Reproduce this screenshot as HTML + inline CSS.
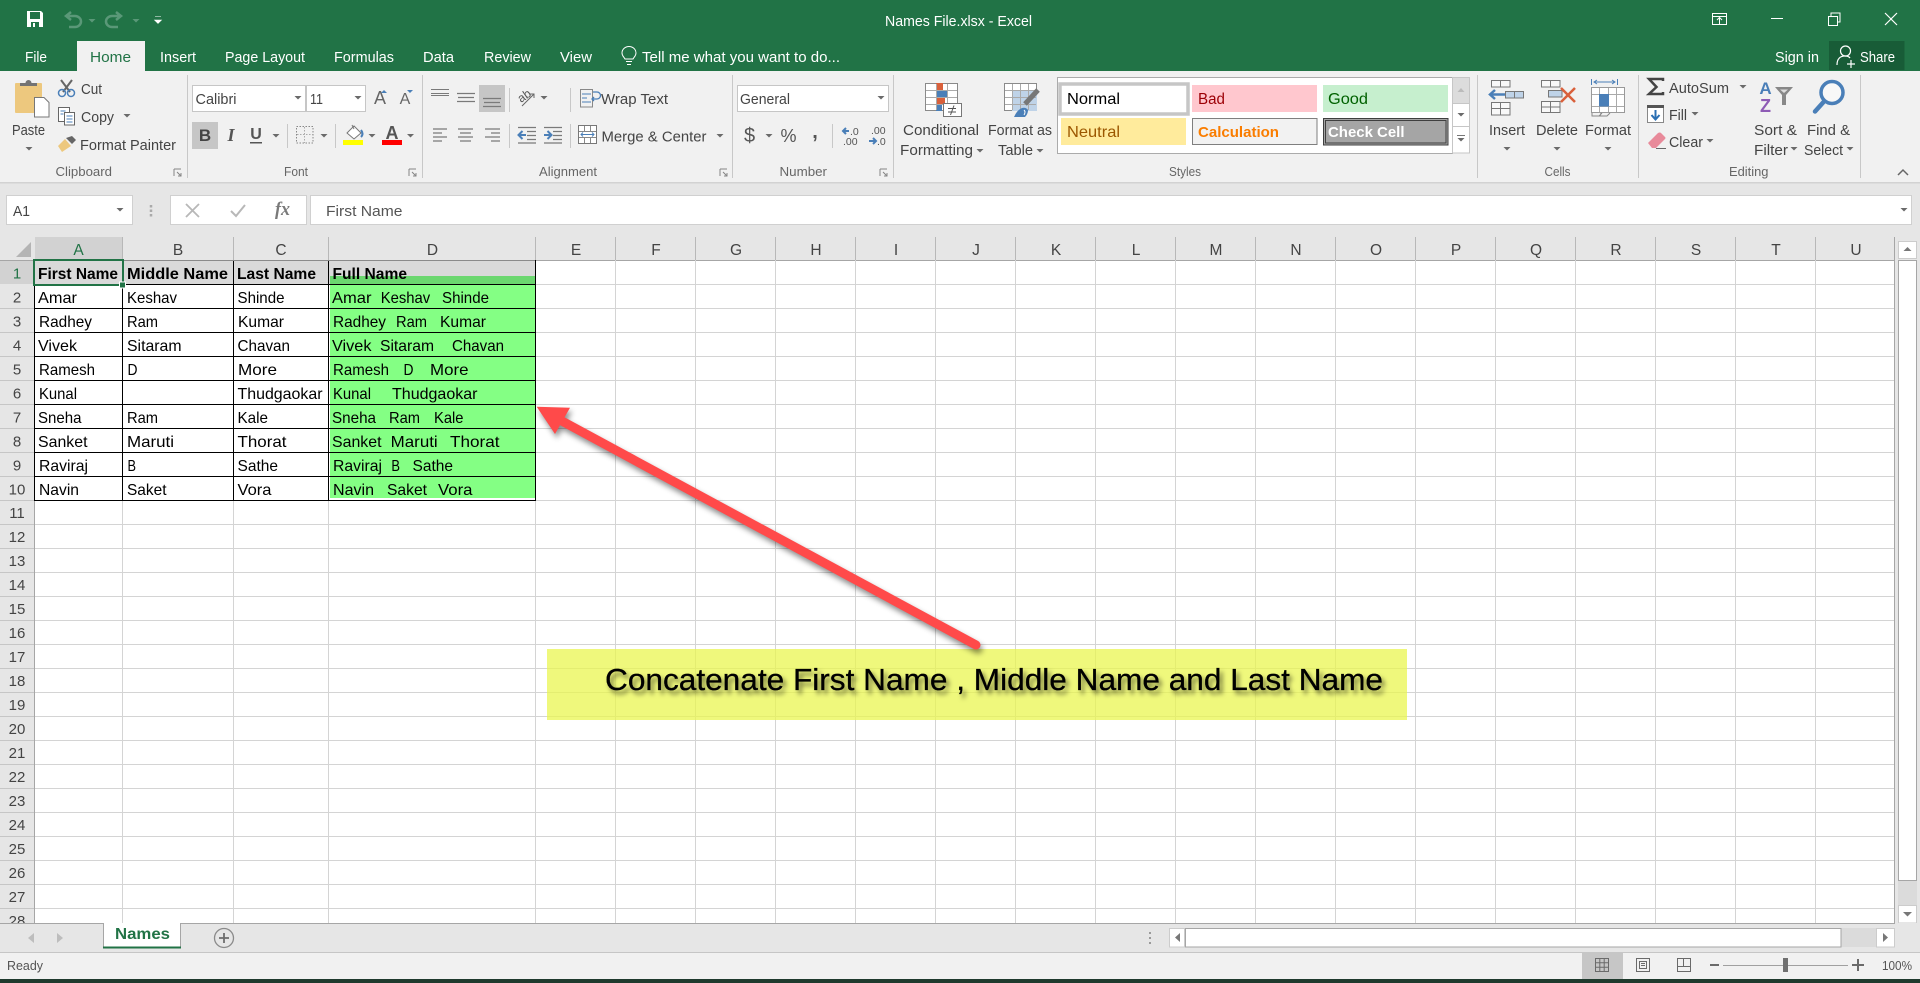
<!DOCTYPE html>
<html><head><meta charset="utf-8"><title>Names File.xlsx - Excel</title>
<style>
html,body{margin:0;padding:0;background:#fff;width:1920px;height:983px;overflow:hidden}
svg{display:block;position:absolute;left:0;top:0}
text{font-family:"Liberation Sans",sans-serif;white-space:pre}
.t{font-size:15px;fill:#fff}
.r{font-size:15px;fill:#444}
.g{font-size:12.5px;fill:#666}
.c{font-size:16px;fill:#000}
.b{font-size:16px;fill:#000;font-weight:bold}
.h{font-size:15.5px;fill:#444;text-anchor:middle}
.n{font-size:15px;fill:#444;text-anchor:middle}
.ic{fill:none;stroke:#7a7a7a;stroke-width:1}
.bl{fill:none;stroke:#4a7fb8;stroke-width:2}
.ln{fill:none;stroke:#7a7a7a;stroke-width:1.3}
</style></head><body>
<svg width="1920" height="983" viewBox="0 0 1920 983" xmlns="http://www.w3.org/2000/svg">
<defs>
<path id="dd" d="M-3.5 0h7l-3.5 3.5z" fill="#6a6a6a"/>
<path id="dl" d="M0 0h7M0 0v7M3 3l4 4M7 4v3H4" stroke="#858585" fill="none"/>
</defs>

<!-- title bar -->
<rect x="0" y="0" width="1920" height="71" fill="#217346"/>
<path d="M27 11h14l2 2v14H27z" fill="#fff"/><rect x="30" y="12" width="10" height="7" fill="#217346"/><rect x="31" y="22" width="8" height="5" fill="#217346"/><rect x="33" y="23" width="2" height="4" fill="#fff"/>
<path d="M66 16h9a6 5.5 0 0 1 0 11h-6M71 12l-5 4 5 4" fill="none" stroke="#5a9878" stroke-width="2.5"/>
<path d="M88.500 19h7l-3.500 3.500z" fill="#5a9878"/>
<path d="M121 16h-9a6 5.500 0 0 0 0 11h6M116 12l5 4-5 4" fill="none" stroke="#5a9878" stroke-width="2.5"/>
<path d="M132.500 19h7l-3.500 3.500z" fill="#5a9878"/>
<path d="M155 16.500h6M154.500 20h7l-3.500 3.500z" fill="#fff" stroke="#fff" stroke-width=".6"/>
<text class="t" x="885" y="26" textLength="147" lengthAdjust="spacingAndGlyphs">Names File.xlsx - Excel</text>
<rect x="1712.500" y="13.500" width="14" height="11" fill="none" stroke="#fff"/><path d="M1713 16.500h13M1719.500 24v-6M1717 20l2.500-2.500 2.500 2.500" fill="none" stroke="#fff"/>
<path d="M1771 18.500h12" stroke="#fff" fill="none"/>
<path d="M1828.500 16.500h9v9h-9zM1831 16v-3h9v9h-2.500" fill="none" stroke="#fff"/>
<path d="M1885 13l12 12M1897 13l-12 12" stroke="#fff" fill="none" stroke-width="1.200"/>

<!-- tabs -->
<rect x="77" y="41" width="68" height="30" fill="#f1f1f1"/>
<text class="t" x="25" y="62" textLength="22" lengthAdjust="spacingAndGlyphs">File</text>
<text class="t" x="90" y="62" textLength="41" lengthAdjust="spacingAndGlyphs" style="fill:#217346">Home</text>
<text class="t" x="160" y="62" textLength="36" lengthAdjust="spacingAndGlyphs">Insert</text>
<text class="t" x="225" y="62" textLength="80" lengthAdjust="spacingAndGlyphs">Page Layout</text>
<text class="t" x="334" y="62" textLength="60" lengthAdjust="spacingAndGlyphs">Formulas</text>
<text class="t" x="423" y="62" textLength="31" lengthAdjust="spacingAndGlyphs">Data</text>
<text class="t" x="484" y="62" textLength="47" lengthAdjust="spacingAndGlyphs">Review</text>
<text class="t" x="560" y="62" textLength="32" lengthAdjust="spacingAndGlyphs">View</text>
<path d="M625 59c-1-2-3-3-3-6a7 6.500 0 0 1 14 0c0 3-2 4-3 6zM626 61.500h6M627 64.500h4" fill="none" stroke="#fff"/>
<text class="t" x="642" y="62" textLength="198" lengthAdjust="spacingAndGlyphs">Tell me what you want to do...</text>
<text class="t" x="1775" y="62" textLength="44" lengthAdjust="spacingAndGlyphs">Sign in</text>
<rect x="1829" y="41" width="75.500" height="29" fill="#185c37"/>
<path d="M1837 65c0-6 3-9 8-9 2 0 4 .5 5 2M1851 60v8M1847 64h8" fill="none" stroke="#fff" stroke-width="1.200"/><circle cx="1845.500" cy="51" r="5" fill="none" stroke="#fff" stroke-width="1.200"/>
<text class="t" x="1860" y="62" textLength="35" lengthAdjust="spacingAndGlyphs">Share</text>

<!-- ribbon -->
<rect x="0" y="71" width="1920" height="111" fill="#f1f1f1"/>
<rect x="0" y="182" width="1920" height="1.500" fill="#d2d2d2"/>
<rect x="0" y="183.500" width="1920" height="54" fill="#e6e6e6"/>
<path d="M187.500 75v103M422.500 75v103M732.500 75v103M893.500 75v103M1477.500 75v103M1638.500 75v103M1860.500 75v103" stroke="#c8c8c8" fill="none"/>

<text class="g" x="55.500" y="176" textLength="56.500" lengthAdjust="spacingAndGlyphs">Clipboard</text>
<text class="g" x="284" y="176" textLength="24" lengthAdjust="spacingAndGlyphs">Font</text>
<text class="g" x="539" y="176" textLength="58" lengthAdjust="spacingAndGlyphs">Alignment</text>
<text class="g" x="779.500" y="176" textLength="47.500" lengthAdjust="spacingAndGlyphs">Number</text>
<text class="g" x="1169" y="176" textLength="32" lengthAdjust="spacingAndGlyphs">Styles</text>
<text class="g" x="1544.500" y="176" textLength="26" lengthAdjust="spacingAndGlyphs">Cells</text>
<text class="g" x="1729" y="176" textLength="39.500" lengthAdjust="spacingAndGlyphs">Editing</text>
<use href="#dl" x="174" y="169"/><use href="#dl" x="409" y="169"/><use href="#dl" x="720" y="169"/><use href="#dl" x="880" y="169"/>
<path d="M1898 175l5-5 5 5" fill="none" stroke="#666" stroke-width="1.500"/>

<!-- clipboard -->
<rect x="15" y="83" width="27" height="30" rx="1" fill="#edc87e"/>
<path d="M20 86v-3h5.500a3 3 0 0 1 6 0h5.500v3z" fill="#737373"/>
<path d="M34.500 97.500h9.500l5 5v14.500h-14.500z" fill="#fff" stroke="#777"/>
<text class="r" x="12" y="135" textLength="33" lengthAdjust="spacingAndGlyphs">Paste</text>
<use href="#dd" x="29" y="147"/>
<path d="M61 80l9 12M72 80l-9 12" stroke="#666" stroke-width="2" fill="none"/><circle cx="62" cy="93" r="3.500" fill="none" stroke="#4a7fb8" stroke-width="1.500"/><circle cx="71" cy="93" r="3.500" fill="none" stroke="#4a7fb8" stroke-width="1.500"/>
<text class="r" x="81" y="94" textLength="21" lengthAdjust="spacingAndGlyphs">Cut</text>
<rect x="58.500" y="107.500" width="11" height="14" fill="#fff" stroke="#666"/><rect x="64.500" y="112.500" width="10" height="12.500" fill="#fff" stroke="#666"/><path d="M60.500 111h5M60.500 114h3M66.500 116h6M66.500 119h6M66.500 122h6" stroke="#4a7fb8" fill="none"/>
<text class="r" x="81" y="122" textLength="33" lengthAdjust="spacingAndGlyphs">Copy</text>
<use href="#dd" x="127" y="114"/>
<path d="M58 146l7-7 6 7-9 6z" fill="#edc87e"/><path d="M66 138l6 6 4-4-4-4z" fill="#666"/>
<text class="r" x="80" y="150" textLength="96" lengthAdjust="spacingAndGlyphs">Format Painter</text>

<!-- font -->
<rect x="192.500" y="85.500" width="113" height="26" fill="#fff" stroke="#c6c6c6"/>
<rect x="306.500" y="85.500" width="59" height="26" fill="#fff" stroke="#c6c6c6"/>
<text class="r" x="195.500" y="104" textLength="41" lengthAdjust="spacingAndGlyphs">Calibri</text>
<text class="r" x="310" y="104" textLength="13" lengthAdjust="spacingAndGlyphs">11</text>
<use href="#dd" x="298" y="96"/><use href="#dd" x="358" y="96"/>
<text x="380" y="104" text-anchor="middle" style="font-size:18px;fill:#666">A</text><path d="M384 90l3 3h-6z" fill="#4a7fb8"/>
<text x="405" y="104" text-anchor="middle" style="font-size:16px;fill:#666">A</text><path d="M407 90h6l-3 3z" fill="#4a7fb8"/>
<rect x="192" y="122" width="26" height="27" fill="#c6c6c6"/>
<text x="205" y="141" text-anchor="middle" style="font-size:17px;font-weight:bold;fill:#444">B</text>
<text x="231" y="141" text-anchor="middle" style="font-family:'Liberation Serif',serif;font-size:18px;font-weight:bold;font-style:italic;fill:#555">I</text>
<text x="256" y="139" text-anchor="middle" style="font-size:16px;font-weight:bold;fill:#555">U</text><rect x="250" y="142" width="12" height="1.500" fill="#555"/>
<use href="#dd" x="276" y="134"/>
<path d="M287.500 124v24M335.500 124v24" stroke="#c8c8c8" fill="none"/>
<rect x="296.500" y="126.500" width="16.500" height="16.500" fill="none" stroke="#888" stroke-dasharray="1.500 1.500"/><path d="M304.500 127v16M297 134.500h16" stroke="#aaa" stroke-dasharray="1.500 1.500" fill="none"/>
<use href="#dd" x="324" y="134"/>
<path d="M347 133l7-7 7 7-7 6z" fill="#fff" stroke="#777"/><path d="M361 130q3 4 0 7" stroke="#4a7fb8" stroke-width="2" fill="none"/><path d="M352 125l2 4" stroke="#777" fill="none"/>
<rect x="343" y="140" width="20" height="5" fill="#ff0"/>
<use href="#dd" x="372" y="134"/>
<text x="392" y="139" text-anchor="middle" style="font-size:18px;font-weight:bold;fill:#555">A</text>
<rect x="382" y="140" width="20" height="5" fill="#f00"/>
<use href="#dd" x="410.500" y="134"/>

<!-- alignment -->
<path d="M431 89.500h18M431 93.500h18M431 95.500h18" stroke="#7a7a7a" fill="none"/>
<path d="M457 93.500h18M458 97.500h16M457 101.500h18" class="ln"/>
<rect x="479" y="85" width="26" height="27" fill="#c6c6c6"/>
<path d="M483 98.500h18M484 102.500h16M483 106.500h18" class="ln"/>
<text x="521" y="103" transform="rotate(-35 521 103)" style="font-size:12px;fill:#555">ab</text><path d="M522 106l12-12M534 98v-4h-4" fill="none" stroke="#666"/>
<use href="#dd" x="544" y="96"/>
<path d="M509.500 88v24M570.500 88v24M509.500 124v24M570.500 124v24" stroke="#c8c8c8" fill="none"/>
<rect x="580.500" y="89.500" width="12" height="17.500" fill="#f1f1f1" stroke="#888"/><path d="M582 94h9M582 98h5M582 102h9" stroke="#4a7fb8" fill="none"/><path d="M593 92h4a3 3 0 0 1 0 7h-5M594 97l-2 2 2 2" fill="none" stroke="#4a7fb8" stroke-width="1.300"/>
<text class="r" x="601" y="104" textLength="67" lengthAdjust="spacingAndGlyphs">Wrap Text</text>
<rect x="578.500" y="125.500" width="18" height="18" fill="#fff" stroke="#777"/><path d="M579 131.500h17M579 137.500h17M584.500 126v5M590.500 126v5M584.500 138v5M590.500 138v5" stroke="#888" fill="none"/><rect x="579" y="132" width="17" height="5" fill="#fff"/><path d="M581 134.500h13M583 132.500l-2 2 2 2M592 132.500l2 2-2 2" stroke="#4a7fb8" fill="none"/>
<text class="r" x="601.500" y="141.500" textLength="105" lengthAdjust="spacingAndGlyphs">Merge &amp; Center</text>
<use href="#dd" x="720" y="134"/>
<path d="M433 129h14M433 133h9M433 137h14M433 141h9" class="ln"/>
<path d="M458 129h15M460 133h11M458 137h15M460 141h11" class="ln"/>
<path d="M485 129h15M491 133h9M485 137h15M491 141h9" class="ln"/>
<path d="M518 127.500h18M527 131.500h9M527 135.500h9M527 139.500h9M518 143h18" class="ln"/><path d="M526 135h-7M522.500 131l-4 4 4 4" class="bl"/>
<path d="M544 127.500h18M553 131.500h9M553 135.500h9M553 139.500h9M544 143h18" class="ln" /><path d="M544 135h7M547.500 131l4 4-4 4" class="bl"/>

<!-- number -->
<rect x="737.500" y="85.500" width="151" height="26" fill="#fff" stroke="#c6c6c6"/>
<text class="r" x="740" y="104" textLength="50" lengthAdjust="spacingAndGlyphs">General</text>
<use href="#dd" x="881" y="96"/>
<text x="749.500" y="142" text-anchor="middle" style="font-size:20px;fill:#555">$</text>
<use href="#dd" x="769" y="134"/>
<text x="788.500" y="142" text-anchor="middle" style="font-size:18px;fill:#555">%</text>
<text x="815" y="138" text-anchor="middle" style="font-size:20px;font-weight:bold;fill:#555">,</text>
<path d="M832.500 124v24" stroke="#c8c8c8" fill="none"/>
<path d="M849 131h-6M846 128l-3 3 3 3" fill="none" stroke="#4a7fb8" stroke-width="2"/>
<text x="850" y="135" style="font-size:10.500px;fill:#555">.0</text><text x="843" y="145" style="font-size:10.500px;fill:#555">.00</text>
<text x="871" y="134" style="font-size:10.500px;fill:#555">.00</text>
<path d="M869 141h7M873 138l3 3-3 3" fill="none" stroke="#4a7fb8" stroke-width="2"/>
<text x="877" y="145" style="font-size:10.500px;fill:#555">.0</text>

<!-- conditional formatting -->
<rect x="925.500" y="83.500" width="32" height="27" fill="#fff" stroke="#8a8a8a"/>
<rect x="936" y="83" width="7" height="7" fill="#d9603b"/><rect x="936" y="91" width="11" height="6" fill="#4a7fb8"/><rect x="936" y="98" width="9" height="6" fill="#d9603b"/><rect x="936" y="105" width="6" height="6" fill="#4a7fb8"/>
<path d="M936.500 84v26M947.500 84v26M926 90.500h31M926 97.500h31M926 104.500h31" stroke="#aaa" fill="none"/>
<rect x="943.500" y="103.500" width="18" height="13" fill="#fff" stroke="#777"/><path d="M948 108.500h8M948 112h8M954 105.500l-3.500 9.500" stroke="#555" fill="none"/>
<text class="r" x="903" y="135" textLength="76" lengthAdjust="spacingAndGlyphs">Conditional</text>
<text class="r" x="900" y="155" textLength="73" lengthAdjust="spacingAndGlyphs">Formatting</text>
<use href="#dd" x="980" y="149"/>
<rect x="1004.500" y="83.500" width="32" height="27" fill="#fff" stroke="#8a8a8a"/>
<rect x="1012" y="90" width="25" height="21" fill="#bfd3e8"/>
<path d="M1012.500 84v26M1020.500 84v26M1028.500 84v26M1005 90.500h31M1005 97.500h31M1005 104.500h31" stroke="#aaa" fill="none"/>
<path d="M1038 90l-13 14" stroke="#777" stroke-width="5" fill="none"/>
<path d="M1014 117q3-7 8-9q4-1 6 2q0 4-3 7z" fill="#4a7fb8"/><path d="M1024 110q2 2 0 5" stroke="#fff" fill="none"/>
<text class="r" x="988" y="135" textLength="64" lengthAdjust="spacingAndGlyphs">Format as</text>
<text class="r" x="998" y="155" textLength="35" lengthAdjust="spacingAndGlyphs">Table</text>
<use href="#dd" x="1040" y="149"/>

<!-- styles gallery -->
<rect x="1057.500" y="77.500" width="395" height="76" fill="#fff" stroke="#ababab"/>
<rect x="1060" y="84" width="128" height="30" fill="#fff" stroke="#c6c6c6" stroke-width="3.500"/>
<text x="1067" y="104" textLength="53" lengthAdjust="spacingAndGlyphs" style="font-size:16px;fill:#000">Normal</text>
<rect x="1192" y="85" width="125" height="27" fill="#ffc7ce"/>
<text x="1198" y="104" textLength="27" lengthAdjust="spacingAndGlyphs" style="font-size:15.500px;fill:#9c0006">Bad</text>
<rect x="1323" y="85" width="125" height="27" fill="#c6efce"/>
<text x="1328" y="104" textLength="40" lengthAdjust="spacingAndGlyphs" style="font-size:16px;fill:#006100">Good</text>
<rect x="1061" y="118" width="125" height="27" fill="#ffeb9c"/>
<text x="1067" y="137" textLength="53" lengthAdjust="spacingAndGlyphs" style="font-size:16px;fill:#9c5700">Neutral</text>
<rect x="1192.500" y="118.500" width="124.500" height="26" fill="#f2f2f2" stroke="#7f7f7f"/>
<text x="1198" y="137" textLength="81" lengthAdjust="spacingAndGlyphs" style="font-size:15px;font-weight:bold;fill:#fa7d00">Calculation</text>
<rect x="1323.500" y="118.500" width="124.500" height="26.500" fill="#a5a5a5" stroke="#3f3f3f"/>
<rect x="1325.500" y="120.500" width="120.500" height="22.500" fill="none" stroke="#3f3f3f"/>
<text x="1328" y="137" textLength="76.500" lengthAdjust="spacingAndGlyphs" style="font-size:15px;font-weight:bold;fill:#fff">Check Cell</text>
<rect x="1452.500" y="77.500" width="17" height="26" fill="#dcdcdc" stroke="#c6c6c6"/>
<rect x="1452.500" y="103.500" width="17" height="23" fill="#fff" stroke="#c6c6c6"/>
<rect x="1452.500" y="126.500" width="17" height="26.500" fill="#fff" stroke="#c6c6c6"/>
<path d="M1461 88l3.500 4h-7z" fill="#bbb"/>
<use href="#dd" x="1461" y="113"/>
<path d="M1457 135.500h8" stroke="#777" fill="none"/><use href="#dd" x="1461" y="138"/>

<!-- cells -->
<rect x="1491.500" y="80.500" width="18.500" height="6.500" fill="#f8f8f8" stroke="#777"/><path d="M1500.500 81v6" stroke="#777" fill="none"/>
<path d="M1505 94.500h-14M1495 90l-5 4.500 5 4.500" fill="none" stroke="#4a7fb8" stroke-width="2.500"/>
<rect x="1505.500" y="91.500" width="18" height="6.500" fill="#bfd3e8" stroke="#777"/><path d="M1514.500 92v6" stroke="#777" fill="none"/>
<rect x="1491.500" y="102.500" width="18.500" height="12.500" fill="#f8f8f8" stroke="#777"/><path d="M1500.500 103v12M1492 108.500h18" stroke="#777" fill="none"/>
<text class="r" x="1489" y="135" textLength="36" lengthAdjust="spacingAndGlyphs">Insert</text><use href="#dd" x="1507" y="147"/>
<rect x="1541.500" y="80.500" width="18.500" height="6.500" fill="#f8f8f8" stroke="#777"/><path d="M1550.500 81v6" stroke="#777" fill="none"/>
<rect x="1548.500" y="90.500" width="13.500" height="6.500" fill="#bfd3e8" stroke="#777"/>
<rect x="1541.500" y="101.500" width="18.500" height="11" fill="#f8f8f8" stroke="#777"/><path d="M1550.500 102v11M1542 107h18" stroke="#777" fill="none"/>
<path d="M1561 88l14 14M1575 88l-14 14" stroke="#d9603b" stroke-width="2.500" fill="none"/>
<text class="r" x="1536" y="135" textLength="42" lengthAdjust="spacingAndGlyphs">Delete</text><use href="#dd" x="1557" y="147"/>
<path d="M1591.500 79v6M1617.500 79v6M1594 82h21M1597 80l-3 2 3 2M1612 80l3 2-3 2" stroke="#4a7fb8" fill="none"/>
<rect x="1591.500" y="87.500" width="33" height="25" fill="#fff" stroke="#999"/>
<path d="M1599.500 88v24M1608.500 88v24M1616.500 88v24M1592 94.500h32M1592 106.500h32" stroke="#aaa" fill="none"/>
<rect x="1599" y="94" width="10" height="12.500" fill="#4a7fb8"/>
<path d="M1592 113v3h7l3-3M1601 113l-1 3h7l3-3" stroke="#888" fill="none"/>
<text class="r" x="1585" y="135" textLength="46" lengthAdjust="spacingAndGlyphs">Format</text><use href="#dd" x="1608" y="147"/>

<!-- editing -->
<path d="M1663 81v-2h-14l7.500 8-7.500 7h14v-2" fill="none" stroke="#444" stroke-width="2.500"/>
<text class="r" x="1669" y="93" textLength="60" lengthAdjust="spacingAndGlyphs">AutoSum</text><use href="#dd" x="1743" y="85"/>
<rect x="1647.500" y="105.500" width="16" height="17" fill="#fff" stroke="#888"/><rect x="1647" y="105" width="17" height="3" fill="#555"/>
<path d="M1655.500 110v9M1651.500 115l4 4.500 4-4.500" fill="none" stroke="#2b6fb3" stroke-width="2"/>
<text class="r" x="1669" y="120" textLength="18" lengthAdjust="spacingAndGlyphs">Fill</text><use href="#dd" x="1695" y="112"/>
<path d="M1648 143l10-10q2-1 3 0l4 4q1 1 0 2l-9 9h-4z" fill="#e88a9a"/><path d="M1656 148.500h10" stroke="#666" fill="none"/>
<text class="r" x="1669" y="147" textLength="34" lengthAdjust="spacingAndGlyphs">Clear</text><use href="#dd" x="1710" y="139"/>
<text x="1765.500" y="94" text-anchor="middle" style="font-size:17px;font-weight:bold;fill:#4a7fb8">A</text>
<text x="1765.500" y="112" text-anchor="middle" style="font-size:18px;font-weight:bold;fill:#8e5bb5">Z</text>
<path d="M1775 87h18l-7 8v10h-4v-10z" fill="#888"/><path d="M1780 89.500h8l-4 3.500z" fill="#ddd"/>
<circle cx="1832" cy="92.500" r="11" fill="#f8f8f8" stroke="#4a7fb8" stroke-width="3.500"/>
<path d="M1824 101.500l-9 10" stroke="#4a7fb8" stroke-width="4.500" stroke-linecap="round" fill="none"/>
<text class="r" x="1754" y="135" textLength="43" lengthAdjust="spacingAndGlyphs">Sort &amp;</text>
<text class="r" x="1754" y="155" textLength="34" lengthAdjust="spacingAndGlyphs">Filter</text><use href="#dd" x="1794" y="147"/>
<text class="r" x="1807" y="135" textLength="43" lengthAdjust="spacingAndGlyphs">Find &amp;</text>
<text class="r" x="1804" y="155" textLength="39" lengthAdjust="spacingAndGlyphs">Select</text><use href="#dd" x="1850" y="147"/>

<!-- formula bar -->
<rect x="6.500" y="195.500" width="126" height="29" fill="#fff" stroke="#d0d0d0"/>
<text class="r" x="13" y="216" textLength="17" lengthAdjust="spacingAndGlyphs">A1</text>
<use href="#dd" x="120" y="208"/>
<path d="M151 205v2.500M151 209.500v2.500M151 214v2.500" stroke="#aaa" stroke-width="2.500" fill="none"/>
<rect x="170.500" y="195.500" width="136" height="29" fill="#fff" stroke="#d0d0d0"/>
<path d="M186 204l13 13M199 204l-13 13" stroke="#b8b8b8" stroke-width="1.800" fill="none"/>
<path d="M231 211l5 5 9-11" stroke="#b8b8b8" stroke-width="2" fill="none"/>
<text x="275" y="215" textLength="15" lengthAdjust="spacingAndGlyphs" style="font-family:'Liberation Serif',serif;font-size:19px;font-style:italic;font-weight:bold;fill:#7a7a7a">fx</text>
<rect x="310.500" y="195.500" width="1601" height="29" fill="#fff" stroke="#d0d0d0"/>
<text class="r" x="326" y="216" textLength="76.500" lengthAdjust="spacingAndGlyphs" style="fill:#555">First Name</text>
<use href="#dd" x="1904" y="208"/>

<!-- sheet background -->
<rect x="0" y="237" width="1895" height="23" fill="#e6e6e6"/>
<rect x="0" y="260" width="35" height="664" fill="#e6e6e6"/>
<rect x="35" y="237" width="87.500" height="23" fill="#d2d2d2"/>
<rect x="0" y="261" width="34" height="23" fill="#d2d2d2"/>
<path d="M31 242v15H16z" fill="#b4b4b4"/>
<path d="M122.500 237v23M233.500 237v23M328.500 237v23M535.500 237v23M615.500 237v23M695.500 237v23M775.500 237v23M855.500 237v23M935.500 237v23M1015.500 237v23M1095.500 237v23M1175.500 237v23M1255.500 237v23M1335.500 237v23M1415.500 237v23M1495.500 237v23M1575.500 237v23M1655.500 237v23M1735.500 237v23M1815.500 237v23" stroke="#b8b8b8" fill="none"/>
<path d="M0 308.500h35M0 332.500h35M0 356.500h35M0 380.500h35M0 404.500h35M0 428.500h35M0 452.500h35M0 476.500h35M0 500.500h35M0 524.500h35M0 548.500h35M0 572.500h35M0 596.500h35M0 620.500h35M0 644.500h35M0 668.500h35M0 692.500h35M0 716.500h35M0 740.500h35M0 764.500h35M0 788.500h35M0 812.500h35M0 836.500h35M0 860.500h35M0 884.500h35M0 908.500h35" stroke="#c6c6c6" fill="none"/>
<path d="M0 260.500h1895M34.500 260v664" stroke="#a6a6a6" fill="none"/>

<!-- gridlines -->
<path d="M35 284.500H1895M35 308.500H1895M35 332.500H1895M35 356.500H1895M35 380.500H1895M35 404.500H1895M35 428.500H1895M35 452.500H1895M35 476.500H1895M35 500.500H1895M35 524.500H1895M35 548.500H1895M35 572.500H1895M35 596.500H1895M35 620.500H1895M35 644.500H1895M35 668.500H1895M35 692.500H1895M35 716.500H1895M35 740.500H1895M35 764.500H1895M35 788.500H1895M35 812.500H1895M35 836.500H1895M35 860.500H1895M35 884.500H1895M35 908.500H1895M122.500 260V923M233.500 260V923M328.500 260V923M535.500 260V923M615.500 260V923M695.500 260V923M775.500 260V923M855.500 260V923M935.500 260V923M1015.500 260V923M1095.500 260V923M1175.500 260V923M1255.500 260V923M1335.500 260V923M1415.500 260V923M1495.500 260V923M1575.500 260V923M1655.500 260V923M1735.500 260V923M1815.500 260V923" stroke="#d4d4d4" fill="none"/>
<path d="M1894.500 237V923" stroke="#a6a6a6" fill="none"/>

<!-- table fills -->
<rect x="35" y="261" width="500" height="23" fill="#d9d9d9"/>
<rect x="330" y="276" width="205" height="8" fill="#6bd76f"/>
<rect x="330" y="285" width="205" height="213" fill="#84ff84"/>
<path d="M35 284.500H536M35 308.500H536M35 332.500H536M35 356.500H536M35 380.500H536M35 404.500H536M35 428.500H536M35 452.500H536M35 476.500H536M35 500.500H536M122.500 260V501M233.500 260V501M328.500 260V501M535.500 260V501M34.500 284V501" stroke="#000" fill="none"/>
<path d="M35 260.500h500" stroke="#8a8a8a" fill="none"/>

<!-- headers text -->
<text class="h" x="78.500" y="255" style="fill:#217346">A</text>
<text class="h" x="178" y="255">B</text>
<text class="h" x="281" y="255">C</text>
<text class="h" x="432.500" y="255">D</text>
<text class="h" x="576" y="255">E</text><text class="h" x="656" y="255">F</text><text class="h" x="736" y="255">G</text><text class="h" x="816" y="255">H</text><text class="h" x="896" y="255">I</text><text class="h" x="976" y="255">J</text><text class="h" x="1056" y="255">K</text><text class="h" x="1136" y="255">L</text><text class="h" x="1216" y="255">M</text><text class="h" x="1296" y="255">N</text><text class="h" x="1376" y="255">O</text><text class="h" x="1456" y="255">P</text><text class="h" x="1536" y="255">Q</text><text class="h" x="1616" y="255">R</text><text class="h" x="1696" y="255">S</text><text class="h" x="1776" y="255">T</text><text class="h" x="1856" y="255">U</text>
<text class="n" x="17" y="278.500" style="fill:#217346">1</text><text class="n" x="17" y="302.500">2</text><text class="n" x="17" y="326.500">3</text><text class="n" x="17" y="350.500">4</text><text class="n" x="17" y="374.500">5</text><text class="n" x="17" y="398.500">6</text><text class="n" x="17" y="422.500">7</text><text class="n" x="17" y="446.500">8</text><text class="n" x="17" y="470.500">9</text><text class="n" x="17" y="494.500">10</text><text class="n" x="17" y="518">11</text><text class="n" x="17" y="542">12</text><text class="n" x="17" y="566">13</text><text class="n" x="17" y="590">14</text><text class="n" x="17" y="614">15</text><text class="n" x="17" y="638">16</text><text class="n" x="17" y="662">17</text><text class="n" x="17" y="686">18</text><text class="n" x="17" y="710">19</text><text class="n" x="17" y="734">20</text><text class="n" x="17" y="758">21</text><text class="n" x="17" y="782">22</text><text class="n" x="17" y="806">23</text><text class="n" x="17" y="830">24</text><text class="n" x="17" y="854">25</text><text class="n" x="17" y="878">26</text><text class="n" x="17" y="902">27</text><text class="n" x="17" y="926">28</text>

<!-- cells text -->
<text class="b" x="38" y="279" textLength="80" lengthAdjust="spacingAndGlyphs">First Name</text>
<text class="b" x="127" y="279" textLength="101" lengthAdjust="spacingAndGlyphs">Middle Name</text>
<text class="b" x="237" y="279" textLength="79" lengthAdjust="spacingAndGlyphs">Last Name</text>
<text class="b" x="332.500" y="279" textLength="74.500" lengthAdjust="spacingAndGlyphs">Full Name</text>

<text class="c" x="38" y="303" textLength="39" lengthAdjust="spacingAndGlyphs">Amar</text><text class="c" x="127" y="303" textLength="50" lengthAdjust="spacingAndGlyphs">Keshav</text><text class="c" x="237.500" y="303" textLength="47" lengthAdjust="spacingAndGlyphs">Shinde</text><text class="c" x="332" y="303" textLength="39.500" lengthAdjust="spacingAndGlyphs">Amar</text><text class="c" x="380.700" y="303" textLength="49.500" lengthAdjust="spacingAndGlyphs">Keshav</text><text class="c" x="442" y="303" textLength="47" lengthAdjust="spacingAndGlyphs">Shinde</text>
<text class="c" x="39" y="327" textLength="53" lengthAdjust="spacingAndGlyphs">Radhey</text><text class="c" x="127" y="327" textLength="31" lengthAdjust="spacingAndGlyphs">Ram</text><text class="c" x="238" y="327" textLength="46" lengthAdjust="spacingAndGlyphs">Kumar</text><text class="c" x="333" y="327" textLength="53" lengthAdjust="spacingAndGlyphs">Radhey</text><text class="c" x="396" y="327" textLength="31" lengthAdjust="spacingAndGlyphs">Ram</text><text class="c" x="440" y="327" textLength="46" lengthAdjust="spacingAndGlyphs">Kumar</text>
<text class="c" x="38" y="351" textLength="39" lengthAdjust="spacingAndGlyphs">Vivek</text><text class="c" x="127" y="351" textLength="54.500" lengthAdjust="spacingAndGlyphs">Sitaram</text><text class="c" x="237.500" y="351" textLength="52.500" lengthAdjust="spacingAndGlyphs">Chavan</text><text class="c" x="332" y="351" textLength="39.500" lengthAdjust="spacingAndGlyphs">Vivek</text><text class="c" x="380" y="351" textLength="54" lengthAdjust="spacingAndGlyphs">Sitaram</text><text class="c" x="452" y="351" textLength="52" lengthAdjust="spacingAndGlyphs">Chavan</text>
<text class="c" x="39" y="375" textLength="56" lengthAdjust="spacingAndGlyphs">Ramesh</text><text class="c" x="127.500" y="375" textLength="10" lengthAdjust="spacingAndGlyphs">D</text><text class="c" x="238" y="375" textLength="39" lengthAdjust="spacingAndGlyphs">More</text><text class="c" x="333" y="375" textLength="56" lengthAdjust="spacingAndGlyphs">Ramesh</text><text class="c" x="403.500" y="375" textLength="10" lengthAdjust="spacingAndGlyphs">D</text><text class="c" x="430" y="375" textLength="38.500" lengthAdjust="spacingAndGlyphs">More</text>
<text class="c" x="39" y="399" textLength="38" lengthAdjust="spacingAndGlyphs">Kunal</text><text class="c" x="237.500" y="399" textLength="85" lengthAdjust="spacingAndGlyphs">Thudgaokar</text><text class="c" x="333" y="399" textLength="38" lengthAdjust="spacingAndGlyphs">Kunal</text><text class="c" x="392" y="399" textLength="85.500" lengthAdjust="spacingAndGlyphs">Thudgaokar</text>
<text class="c" x="38" y="423" textLength="43.500" lengthAdjust="spacingAndGlyphs">Sneha</text><text class="c" x="127" y="423" textLength="31" lengthAdjust="spacingAndGlyphs">Ram</text><text class="c" x="237.500" y="423" textLength="30.500" lengthAdjust="spacingAndGlyphs">Kale</text><text class="c" x="332" y="423" textLength="44" lengthAdjust="spacingAndGlyphs">Sneha</text><text class="c" x="389" y="423" textLength="31" lengthAdjust="spacingAndGlyphs">Ram</text><text class="c" x="434" y="423" textLength="29.500" lengthAdjust="spacingAndGlyphs">Kale</text>
<text class="c" x="38" y="447" textLength="49.500" lengthAdjust="spacingAndGlyphs">Sanket</text><text class="c" x="127" y="447" textLength="47" lengthAdjust="spacingAndGlyphs">Maruti</text><text class="c" x="237.500" y="447" textLength="49" lengthAdjust="spacingAndGlyphs">Thorat</text><text class="c" x="332" y="447" textLength="49.500" lengthAdjust="spacingAndGlyphs">Sanket</text><text class="c" x="390.700" y="447" textLength="47" lengthAdjust="spacingAndGlyphs">Maruti</text><text class="c" x="450" y="447" textLength="49.500" lengthAdjust="spacingAndGlyphs">Thorat</text>
<text class="c" x="39" y="471" textLength="49" lengthAdjust="spacingAndGlyphs">Raviraj</text><text class="c" x="127.500" y="471" textLength="8.500" lengthAdjust="spacingAndGlyphs">B</text><text class="c" x="237.500" y="471" textLength="40.500" lengthAdjust="spacingAndGlyphs">Sathe</text><text class="c" x="333" y="471" textLength="49" lengthAdjust="spacingAndGlyphs">Raviraj</text><text class="c" x="391.400" y="471" textLength="8.600" lengthAdjust="spacingAndGlyphs">B</text><text class="c" x="412.500" y="471" textLength="40.500" lengthAdjust="spacingAndGlyphs">Sathe</text>
<text class="c" x="39" y="495" textLength="40" lengthAdjust="spacingAndGlyphs">Navin</text><text class="c" x="127" y="495" textLength="39.500" lengthAdjust="spacingAndGlyphs">Saket</text><text class="c" x="237.500" y="495" textLength="34" lengthAdjust="spacingAndGlyphs">Vora</text><text class="c" x="333" y="495" textLength="41" lengthAdjust="spacingAndGlyphs">Navin</text><text class="c" x="387" y="495" textLength="40" lengthAdjust="spacingAndGlyphs">Saket</text><text class="c" x="438" y="495" textLength="34.500" lengthAdjust="spacingAndGlyphs">Vora</text>

<!-- selection -->
<rect x="34" y="260" width="89" height="25" fill="none" stroke="#217346" stroke-width="2"/>
<rect x="119.500" y="282" width="6" height="6" fill="#217346" stroke="#fff"/>

<!-- annotation -->
<rect x="547" y="649" width="860" height="71" fill="#e9f650" fill-opacity=".75"/>
<g style="filter:drop-shadow(2px 4px 3px rgba(0,0,0,.45))">
<path d="M560 420L976 645" stroke="#ff4a4a" stroke-width="9" stroke-linecap="round" fill="none"/>
<path d="M536.700 406.700L570 407.700L555 434z" fill="#ff4a4a"/>
</g>
<text x="605" y="690" textLength="778" lengthAdjust="spacingAndGlyphs" style="font-size:30.500px;fill:#000;stroke:#000;stroke-width:.3;filter:drop-shadow(3px 4px 2.500px rgba(0,0,0,.5))">Concatenate First Name , Middle Name and Last Name</text>

<!-- vertical scrollbar -->
<rect x="1895" y="237" width="25" height="687" fill="#e6e6e6"/>
<rect x="1898" y="260" width="19" height="645" fill="#dbdbdb"/>
<rect x="1898.500" y="260.500" width="18" height="620" fill="#fff" stroke="#a6a6a6"/>
<rect x="1898.500" y="241.500" width="18" height="17" fill="#fff" stroke="#ccc"/><path d="M1907.500 247l4 4h-8z" fill="#777"/>
<rect x="1898.500" y="905.500" width="18" height="17.500" fill="#fff" stroke="#ccc"/><path d="M1903 912h9l-4.500 4.500z" fill="#777"/>

<!-- tabs bar -->
<rect x="0" y="923" width="1920" height="29" fill="#e6e6e6"/>
<path d="M0 923.500H1895" stroke="#a6a6a6" fill="none"/>
<path d="M34 933v10l-6-5zM57 933v10l6-5z" fill="#bdbdbd"/>
<path d="M103.500 923.500V947.500H180.500V923.500" fill="#fff" stroke="#a6a6a6"/>
<rect x="103" y="946.500" width="78" height="2" fill="#217346"/>
<rect x="104" y="923" width="76" height="2" fill="#fff"/>
<text x="115" y="939" textLength="55" lengthAdjust="spacingAndGlyphs" style="font-size:16px;font-weight:bold;fill:#217346">Names</text>
<circle cx="224" cy="938" r="9.500" fill="none" stroke="#8a8a8a" stroke-width="1.300"/><path d="M219 938h10M224 933v10" stroke="#6e6e6e" stroke-width="1.800" fill="none"/>
<path d="M1150 932v2M1150 937v2M1150 942v2" stroke="#9a9a9a" stroke-width="2" fill="none"/>
<rect x="1169" y="928" width="726" height="19" fill="#dbdbdb"/>
<rect x="1169.500" y="928.500" width="15" height="18.500" fill="#fff" stroke="#ccc"/><path d="M1180 933v9l-5-4.500z" fill="#777"/>
<rect x="1185.500" y="928.500" width="655.500" height="18.500" fill="#fff" stroke="#a6a6a6"/>
<rect x="1876.500" y="928.500" width="18" height="18.500" fill="#fff" stroke="#ccc"/><path d="M1883 933v9l5-4.500z" fill="#777"/>

<!-- status bar -->
<rect x="0" y="952" width="1920" height="27" fill="#f1f1f1"/>
<path d="M0 952.500H1920" stroke="#c6c6c6" fill="none"/>
<rect x="0" y="979" width="1920" height="4" fill="#1f3a2d"/>
<text x="7" y="970" textLength="36" lengthAdjust="spacingAndGlyphs" style="font-size:13px;fill:#555">Ready</text>
<rect x="1582" y="953" width="41" height="26" fill="#c6c6c6"/>
<path d="M1595.500 958.500h13v13h-13zM1599.800 959v12M1604.200 959v12M1596 962.800h12M1596 967.200h12" stroke="#6a6a6a" fill="none"/>
<rect x="1636.500" y="958.500" width="13" height="13" fill="none" stroke="#6a6a6a"/><rect x="1639.500" y="961.500" width="7" height="7" fill="none" stroke="#6a6a6a"/><path d="M1641 963.500h4M1641 965.500h4" stroke="#6a6a6a" fill="none"/>
<rect x="1677.500" y="958.500" width="13" height="13" fill="none" stroke="#6a6a6a"/><path d="M1677.500 966.500h13M1683.500 959v7" stroke="#6a6a6a" fill="none"/>
<path d="M1710 965h9" stroke="#6a6a6a" stroke-width="2" fill="none"/>
<path d="M1723 965.500h125" stroke="#a0a0a0" fill="none"/>
<rect x="1783" y="958" width="5" height="14" fill="#707070"/>
<path d="M1852 965h12M1858 959v12" stroke="#6a6a6a" stroke-width="2" fill="none"/>
<text x="1882" y="970" textLength="30" lengthAdjust="spacingAndGlyphs" style="font-size:13px;fill:#555">100%</text>
</svg>
</body></html>
